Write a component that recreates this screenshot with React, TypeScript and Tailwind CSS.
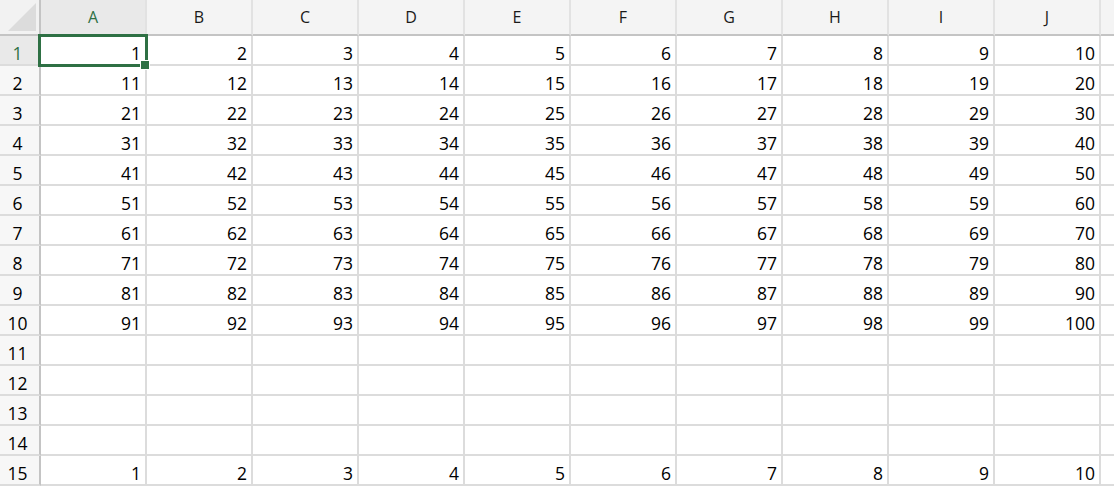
import React from 'react';

const cols = ['A', 'B', 'C', 'D', 'E', 'F', 'G', 'H', 'I', 'J'];

// row -> values (empty rows 11-14)
const rows: (number | null)[][] = Array.from({ length: 15 }, (_, r) => {
  if (r < 10) return cols.map((_, c) => r * 10 + c + 1);
  if (r === 14) return cols.map((_, c) => c + 1);
  return cols.map(() => null);
});

const font = { fontFamily: '"Open Sans", "Noto Sans", sans-serif' };

const App = () => {
  return (
    <div className="w-[1114px] h-[488px] overflow-hidden bg-white text-[#111]" style={font}>
      <div className="grid grid-cols-[41px_repeat(10,106px)_1fr]">
        {/* corner */}
        <div className="h-9 bg-[#f2f2f2] border-r-2 border-b-2 border-[#c4c4c4] flex items-end justify-end p-[3px]">
          <svg width="28" height="28" viewBox="0 0 28 28">
            <polygon points="28,0 28,28 0,28" fill="#dcdcdc" />
          </svg>
        </div>
        {cols.map((c, i) => (
          <div
            key={c}
            className={
              'h-9 border-r-2 border-b-2 border-r-[#e2e2e2] border-b-[#c4c4c4] flex items-center justify-center text-[16px] ' +
              (i === 0 ? 'bg-[#e9e9e9] text-[#2e7044]' : 'bg-[#f4f4f4] text-[#1a1a1a]')
            }
          >
            {c}
          </div>
        ))}
        <div className="h-9 bg-[#f4f4f4] border-b-2 border-[#c4c4c4]" />

        {rows.map((vals, r) => (
          <React.Fragment key={r}>
            <div
              className={
                'h-[30px] border-r-2 border-b-2 border-r-[#c4c4c4] border-b-[#dcdcdc] flex items-center justify-center pr-1 pt-[6px] text-[17.5px] ' +
                (r === 0 ? 'bg-[#e9e9e9] text-[#2e7044]' : 'bg-[#f7f7f7] text-black')
              }
            >
              {r + 1}
            </div>
            {vals.map((v, c) => (
              <div
                key={c}
                className="relative h-[30px] border-r-2 border-b-2 border-[#dcdcdc] flex items-center justify-end pr-[4px] pt-[6px] text-[17.5px] text-black"
              >
                {v}
                {r === 0 && c === 0 && (
                  <>
                    <div className="absolute z-10 -left-[3px] -top-[2px] -right-[3px] -bottom-[3px] border-[3px] border-[#2e7044]" />
                    <div className="absolute z-20 -right-[5px] -bottom-[6px] w-[10px] h-[10px] bg-[#2e7044] border border-white" />
                  </>
                )}
              </div>
            ))}
            <div className="h-[30px] border-b-2 border-[#dcdcdc]" />
          </React.Fragment>
        ))}
      </div>
    </div>
  );
};

export default App;
